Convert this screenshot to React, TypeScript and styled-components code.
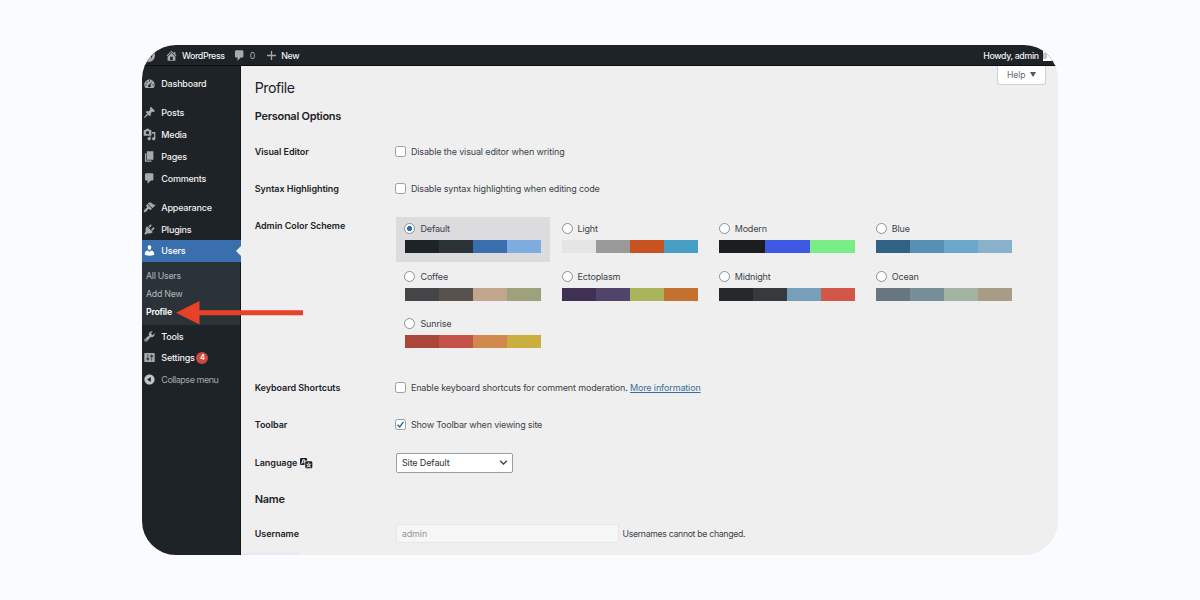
import React from 'react';
import styled, { createGlobalStyle } from 'styled-components';

const Global = createGlobalStyle`
  * { box-sizing: border-box; }
  body { margin: 0; background: #f9fbff; }
`;

const Page = styled.div`
  width: 1200px;
  height: 600px;
  padding: 45px 142px;
  background: #f9fbff;
  font-family: Inter, 'Liberation Sans', sans-serif;
  overflow: hidden;
`;

const Frame = styled.div`
  position: relative;
  display: flex;
  flex-direction: column;
  width: 916px;
  height: 510px;
  border-radius: 34px;
  overflow: hidden;
  background: #efefef;
`;

const TopBar = styled.header`
  display: flex;
  align-items: center;
  flex: none;
  height: 20.5px;
  padding: 1.2px 0 0 0;
  background: #1d2327;
  border-bottom: 1px solid #0b0f12;
  color: #f0f0f1;
  font-size: 8.8px;
  font-weight: 500;
  letter-spacing: -0.36px;
`;

const BarItem = styled.div<{ $left: number; $gap?: number; $dim?: boolean }>`
  display: flex;
  align-items: center;
  white-space: nowrap;
  margin-left: ${(p) => p.$left}px;
  gap: ${(p) => p.$gap ?? 4}px;
  color: ${(p) => (p.$dim ? '#a7aaad' : '#f0f0f1')};
  font-weight: ${(p) => (p.$dim ? 400 : 500)};
`;

const Account = styled.div`
  display: flex;
  align-items: center;
  margin-left: auto;
  gap: 4.3px;
  height: 19px;
`;

const Avatar = styled.div`
  width: 15px;
  height: 15px;
  margin-top: -4px;
  background: radial-gradient(circle at 1px 10px, #c3c4c7 3px, #fff 3.5px);
`;

const Body = styled.div`
  display: flex;
  flex: 1;
  min-height: 0;
`;

const Sidebar = styled.nav`
  width: 99px;
  flex: none;
  padding-top: 7.6px;
  background: #1d2327;
  border-right: 1px solid #101517;
`;

const MenuRow = styled.div<{ $active?: boolean; $dim?: boolean }>`
  position: relative;
  display: flex;
  align-items: center;
  height: 21.8px;
  width: 99px;
  padding-left: 1.2px;
  gap: 5.1px;
  white-space: nowrap;
  font-size: 9px;
  letter-spacing: ${(p) => (p.$dim ? -0.47 : -0.2)}px;
  font-weight: ${(p) => (p.$dim ? 400 : 500)};
  color: ${(p) => (p.$active ? '#fff' : p.$dim ? '#a7aaad' : '#f0f0f1')};
  background: ${(p) => (p.$active ? '#3a6fad' : 'transparent')};
`;

const Separator = styled.div`
  height: 7.2px;
`;

const Notch = styled.span`
  position: absolute;
  right: 0;
  top: 5.5px;
  border: 5.5px solid transparent;
  border-left-width: 0;
  border-right-color: #efefef;
`;

const Submenu = styled.div`
  height: 63.4px;
  padding: 4.9px 0 0 4px;
  background: #2c3338;
`;

const SubItem = styled.div<{ $current?: boolean }>`
  height: 18.3px;
  line-height: 18.3px;
  font-size: 8.8px;
  letter-spacing: -0.25px;
  font-weight: ${(p) => (p.$current ? 600 : 400)};
  color: ${(p) => (p.$current ? '#fff' : '#b4b9be')};
`;

const Count = styled.span`
  width: 12px;
  height: 12px;
  margin-left: -3.5px;
  margin-top: 1px;
  border-radius: 50%;
  background: #cb4a3f;
  color: #fff;
  font-size: 7.5px;
  font-weight: 600;
  line-height: 12px;
  text-align: center;
`;

const Content = styled.main`
  position: relative;
  flex: 1;
  padding-left: 13.7px;
  color: #1d2327;
`;

const Title = styled.h1`
  margin: 0;
  padding-top: 8px;
  height: 36.5px;
  line-height: 28px;
  font-size: 14.2px;
  letter-spacing: -0.45px;
  font-weight: 400;
`;

const Heading = styled.h2<{ $height: number; $line: number }>`
  margin: 0;
  height: ${(p) => p.$height}px;
  line-height: ${(p) => p.$line}px;
  font-size: 11px;
  letter-spacing: -0.28px;
  font-weight: 600;
`;

const FormRow = styled.div<{ $height: number; $top?: boolean }>`
  display: grid;
  grid-template-columns: 141.3px 1fr;
  align-items: ${(p) => (p.$top ? 'start' : 'center')};
  height: ${(p) => p.$height}px;
`;

const Label = styled.div<{ $top?: boolean }>`
  display: flex;
  align-items: center;
  gap: 2.5px;
  padding-top: ${(p) => (p.$top ? 12.5 : 0)}px;
  font-size: 9px;
  letter-spacing: -0.05px;
  line-height: 12px;
  font-weight: 600;
`;

const Field = styled.div<{ $tracking?: number }>`
  display: flex;
  align-items: center;
  gap: 5px;
  white-space: nowrap;
  font-size: 9px;
  letter-spacing: ${(p) => p.$tracking ?? -0.14}px;
  color: #3c434a;
`;

const Check = styled.span`
  display: flex;
  align-items: center;
  justify-content: center;
  width: 11px;
  height: 11px;
  margin-top: -0.6px;
  margin-left: -0.8px;
  margin-right: -0.3px;
  border: 1px solid #9a9da1;
  border-radius: 2.5px;
  background: #fff;
`;

const FieldText = styled.span`
  position: relative;
  top: -0.5px;
`;

const Link = styled.a`
  margin-left: 2.4px;
  color: #3a6d9b;
  text-decoration: underline;
  text-underline-offset: 1px;
  text-decoration-thickness: 1px;
`;

const Schemes = styled.div`
  display: grid;
  grid-template-columns: repeat(4, 154px);
  grid-auto-rows: 45px;
  column-gap: 3.1px;
  row-gap: 2.6px;
  padding-top: 10px;
`;

const Scheme = styled.div<{ $selected?: boolean }>`
  padding: 5.5px 9px 0;
  background: ${(p) => (p.$selected ? '#dcdcde' : 'transparent')};
`;

const SchemeName = styled.div`
  display: flex;
  align-items: center;
  gap: 5px;
  height: 12px;
  margin-left: -0.5px;
  font-size: 9px;
  letter-spacing: -0.17px;
  color: #3c434a;
`;

const Radio = styled.span<{ $on?: boolean }>`
  width: 11px;
  height: 11px;
  border: 1px solid #8c8f94;
  border-radius: 50%;
  background: ${(p) => (p.$on ? 'radial-gradient(circle, #2f69ab 2.2px, #fff 2.9px)' : '#fff')};
`;

const Palette = styled.div`
  display: flex;
  height: 13px;
  margin-top: 5.5px;
`;

const Swatch = styled.span<{ $color: string }>`
  flex: 1;
  background: ${(p) => p.$color};
`;

const Select = styled.div`
  display: flex;
  align-items: center;
  justify-content: space-between;
  width: 117px;
  height: 20px;
  padding: 0 4px 0 5px;
  border: 1px solid #9a9da1;
  border-radius: 2px;
  background: #fff;
  color: #2c3338;
`;

const Input = styled.div`
  width: 223.3px;
  height: 19px;
  margin-right: -1.8px;
  padding-left: 4.7px;
  border: 1px solid #e6e6e7;
  border-radius: 2px;
  background: #f6f6f6;
  color: #94979b;
  letter-spacing: -0.1px;
  line-height: 17px;
`;

const Note = styled.span`
  font-size: 8.7px;
  letter-spacing: -0.3px;
`;

const Help = styled.div`
  position: absolute;
  top: 0;
  right: 12px;
  display: flex;
  align-items: center;
  justify-content: center;
  gap: 5px;
  width: 49.5px;
  height: 19.5px;
  padding-left: 1px;
  border: 1px solid #cfd0d3;
  border-top: 0;
  border-radius: 0 0 3px 3px;
  background: #fff;
  color: #646970;
  font-size: 8.6px;
  letter-spacing: -0.1px;
`;

const StatusEdge = styled.div`
  position: absolute;
  left: 0;
  bottom: 0;
  width: 58px;
  height: 3px;
  background: linear-gradient(#ededef, #e6e8ed);
`;

const Arrow = styled.svg`
  position: absolute;
  left: 34px;
  top: 255px;
`;

const paths = {
  home: 'M16 8.5l1.53 1.53-1.06 1.06L10 4.6l-6.47 6.49-1.06-1.06L10 2.5l4 4v-2h2v4zm-6-2.46l6 5.99V18H4v-5.97zM12 17v-5H8v5h4z',
  comment: 'M5 2h9c1.1 0 2 .9 2 2v7c0 1.1-.9 2-2 2h-2l-5 5v-5H5c-1.1 0-2-.9-2-2V4c0-1.1.9-2 2-2z',
  plus: 'M9 3h2v6h6v2h-6v6H9v-6H3V9h6z',
  wordpress:
    'M20 10c0-5.510-4.490-10-10-10C4.480 0 0 4.490 0 10c0 5.520 4.480 10 10 10 5.510 0 10-4.480 10-10zM7.780 15.370L4.370 6.220c.55-.02 1.170-.08 1.170-.08.5-.06.44-1.130-.06-1.110 0 0-1.450.11-2.370.11-.18 0-.37 0-.58-.010C4.120 2.690 6.870 1.110 10 1.110c2.330 0 4.450.87 6.050 2.340-.68-.11-1.650.39-1.650 1.580 0 .74.45 1.360.9 2.100.35.61.55 1.360.55 2.460 0 1.490-1.400 5-1.400 5l-3.030-8.370c.54-.02.82-.17.82-.17.5-.05.44-1.250-.06-1.220 0 0-1.440.12-2.380.12-.87 0-2.330-.12-2.330-.12-.5-.03-.56 1.200-.06 1.220l.92.08 1.260 3.410z',
  dashboard:
    'M3.76 17h12.480c1.100-1.370 1.760-3.110 1.760-5 0-4.420-3.580-8-8-8s-8 3.580-8 8c0 1.890.66 3.630 1.760 5zM9 6a1 1 0 1 0 2 0a1 1 0 1 0-2 0zM5 8a1 1 0 1 0 2 0a1 1 0 1 0-2 0zM3.500 12a1 1 0 1 0 2 0a1 1 0 1 0-2 0zM14.500 12a1 1 0 1 0 2 0a1 1 0 1 0-2 0zM14.300 7.100l-2.700 5.200a2.100 2.100 0 1 1-1.500-.8z',
  post: 'M10.44 3.02l1.82-1.82 6.36 6.35-1.83 1.82c-1.05-.68-2.48-.57-3.41.36l-.75.75c-.92.93-1.04 2.35-.35 3.41l-1.83 1.82-2.41-2.41-2.8 2.79c-.42.42-3.38 2.71-3.8 2.29s1.86-3.39 2.28-3.81l2.79-2.79L4.1 9.36l1.83-1.82c1.05.69 2.48.57 3.4-.36l.75-.75c.93-.92 1.05-2.35.36-3.41z',
  media:
    'M13 11V4c0-.55-.45-1-1-1h-1.67L9 1H5L3.67 3H2c-.55 0-1 .45-1 1v7c0 .55.45 1 1 1h10c.55 0 1-.45 1-1zM7 4.5c1.38 0 2.5 1.12 2.5 2.5S8.38 9.5 7 9.5 4.5 8.38 4.5 7 5.62 4.5 7 4.5zM14 6h5v10.5c0 1.38-1.12 2.5-2.5 2.5S14 17.88 14 16.5s1.12-2.5 2.5-2.5c.17 0 .34.02.5.05V9h-3V6zm-4 8.05V13h2v3.5c0 1.38-1.12 2.5-2.5 2.5S7 17.88 7 16.5 8.12 14 9.5 14c.17 0 .34.02.5.05z',
  page: 'M6 15V2h10v13H6zm-1 1h8v2H3V5h2v11z',
  appearance:
    'M14.48 11.06L7.41 3.99l1.5-1.5c.5-.56 2.3-.47 3.51.32 1.21.8 1.43 1.28 2.91 2.1 1.18.64 2.45 1.26 4.45.85zm-.71.71L6.7 4.7 4.93 6.47c-.39.39-.39 1.02 0 1.41l1.06 1.06c.39.39.39 1.03 0 1.42-.6.6-1.43 1.11-2.21 1.69-.35.26-.7.53-1.01.84C1.43 14.23.4 16.08 1.4 17.07c.99 1 2.84-.03 4.18-1.36.31-.31.58-.66.85-1.02.57-.78 1.08-1.61 1.69-2.21.39-.39 1.02-.39 1.41 0l1.06 1.06c.39.39 1.02.39 1.41 0z',
  plugins:
    'M13.11 4.36L9.87 7.6 8 5.73l3.24-3.24c.35-.34 1.05-.2 1.56.32.52.51.66 1.21.31 1.55zm-8 1.77l.91-1.12 9.01 9.01-1.19.84c-.71.71-2.63 1.16-3.82 1.16H6.14L4.9 17.26c-.59.59-1.54.59-2.12 0-.59-.58-.59-1.53 0-2.12l1.24-1.24v-3.88c0-1.13.4-3.19 1.09-3.89zm7.26 3.97l3.24-3.24c.34-.35 1.04-.21 1.55.31.52.51.66 1.21.31 1.55l-3.24 3.25z',
  users:
    'M10 9.25c-2.27 0-2.73-3.44-2.73-3.44C7 4.02 7.82 2 9.97 2c2.16 0 2.98 2.02 2.71 3.81 0 0-.41 3.44-2.68 3.44zm0 2.57L12.72 10c2.39 0 4.52 2.33 4.52 4.53v2.49s-3.65 1.13-7.24 1.13c-3.65 0-7.24-1.13-7.24-1.13v-2.49c0-2.25 1.94-4.48 4.47-4.48z',
  tools:
    'M16.68 9.77c-1.34 1.34-3.3 1.67-4.95.99l-5.41 6.52c-.99.99-2.59.99-3.58 0s-.99-2.59 0-3.57l6.52-5.42c-.68-1.65-.35-3.61.99-4.95 1.28-1.28 3.12-1.62 4.72-1.06l-2.89 2.89 2.82 2.82 2.86-2.87c.53 1.58.18 3.39-1.08 4.65zM3.81 16.21c.4.39 1.04.39 1.43 0 .4-.4.4-1.04 0-1.43-.39-.4-1.03-.4-1.43 0-.39.39-.39 1.03 0 1.43z',
  settings:
    'M18 16V4c0-.55-.45-1-1-1H3c-.55 0-1 .45-1 1v12c0 .55.45 1 1 1h14c.55 0 1-.45 1-1zM8 11h1c.55 0 1 .45 1 1s-.45 1-1 1H8v1.5c0 .28-.22.5-.5.5s-.5-.22-.5-.5V13H6c-.55 0-1-.45-1-1s.45-1 1-1h1V5.5c0-.28.22-.5.5-.5s.5.22.5.5V11zm5-2h-1c-.55 0-1-.45-1-1s.45-1 1-1h1V5.5c0-.28.22-.5.5-.5s.5.22.5.5V7h1c.55 0 1 .45 1 1s-.45 1-1 1h-1v5.5c0 .28-.22.5-.5.5s-.5-.22-.5-.5V9z',
  collapse:
    'M10 2.16c4.33 0 7.84 3.51 7.84 7.84s-3.51 7.84-7.84 7.84S2.16 14.33 2.16 10 5.71 2.16 10 2.16zm2 11.72V6.12L6.18 9.97z',
  translation:
    'M11 7H9.49c-.63 0-1.25.3-1.59.7L7 5H4.13l-2.39 7h1.69l.74-2H7v4H2c-1.1 0-2-.9-2-2V5c0-1.1.9-2 2-2h7c1.1 0 2 .9 2 2v2zM6.51 9H4.49l1-2.93zM10 8h7c1.1 0 2 .9 2 2v7c0 1.1-.9 2-2 2h-7c-1.1 0-2-.9-2-2v-7c0-1.1.9-2 2-2zm7.25 5v-1.08h-3.17V9.75h-1.16v2.17H9.75V13h1.28c.11.85.56 1.85 1.28 2.62-.87.36-1.89.62-2.31.62-.01.02.22.97.2 1.46.84 0 2.21-.5 3.28-1.15 1.09.65 2.48 1.15 3.34 1.15-.02-.49.2-1.44.2-1.46-.43 0-1.49-.27-2.38-.63.7-.77 1.14-1.77 1.25-2.61h1.36zm-3.81 1.93c-.5-.46-.85-1.13-1.01-1.93h2.09c-.17.8-.51 1.47-1 1.93l-.04.03s-.03-.02-.04-.03z',
};

type IconName = keyof typeof paths;

const Icon = ({ name, size = 13, color = '#a7aaad' }: { name: IconName; size?: number; color?: string }) => (
  <svg width={size} height={size} viewBox="0 0 20 20" fill={color} fillRule="evenodd">
    <path d={paths[name]} />
  </svg>
);

const MenuItem = ({ icon, label, dim, active, count }: { icon: IconName; label: string; dim?: boolean; active?: boolean; count?: number }) => (
  <MenuRow $dim={dim} $active={active}>
    <Icon name={icon} color={active ? '#fff' : dim ? '#c3c4c7' : '#a7aaad'} />
    {label}
    {count && <Count>{count}</Count>}
    {active && <Notch />}
  </MenuRow>
);

const schemes: { name: string; colors: string[] }[] = [
  { name: 'Default', colors: ['#1d2327', '#2c3338', '#3a6fad', '#7facdf'] },
  { name: 'Light', colors: ['#e5e5e6', '#999a99', '#c75321', '#489fc6'] },
  { name: 'Modern', colors: ['#1c1d20', '#3e58e1', '#7bed86'] },
  { name: 'Blue', colors: ['#2f6285', '#5691b3', '#69a7cb', '#89b1cb'] },
  { name: 'Coffee', colors: ['#454446', '#58524f', '#c2a58d', '#9ea27c'] },
  { name: 'Ectoplasm', colors: ['#403153', '#51446b', '#a8b55b', '#c3712f'] },
  { name: 'Midnight', colors: ['#25282b', '#363a3c', '#789fb9', '#d15848'] },
  { name: 'Ocean', colors: ['#687681', '#778d97', '#a3b5a2', '#a89c86'] },
  { name: 'Sunrise', colors: ['#ab463b', '#c55347', '#d2894d', '#c9af3d'] },
];

const CheckField = ({ text, checked, link, tracking }: { text: string; checked?: boolean; link?: string; tracking?: number }) => (
  <Field $tracking={tracking}>
    <Check>
      {checked && (
        <svg width="9" height="9" viewBox="0 0 9 9" fill="none" stroke="#2f69a5" strokeWidth="1.5">
          <path d="M1.500 4.700L3.700 6.900L7.500 1.900" />
        </svg>
      )}
    </Check>
    <FieldText>
      {text}
      {link && <Link>{link}</Link>}
    </FieldText>
  </Field>
);

export default function App() {
  return (
    <Page>
      <Global />
      <Frame>
        <TopBar>
          <Icon name="wordpress" size={13} />
          <BarItem $left={10}>
            <Icon name="home" />
            WordPress
          </BarItem>
          <BarItem $left={8.6} $gap={3.6} $dim>
            <Icon name="comment" />0
          </BarItem>
          <BarItem $left={9.8} $gap={3.4}>
            <Icon name="plus" />
            New
          </BarItem>
          <Account>
            Howdy, admin
            <Avatar />
          </Account>
        </TopBar>
        <Body>
          <Sidebar>
            <MenuItem icon="dashboard" label="Dashboard" />
            <Separator />
            <MenuItem icon="post" label="Posts" />
            <MenuItem icon="media" label="Media" />
            <MenuItem icon="page" label="Pages" />
            <MenuItem icon="comment" label="Comments" />
            <Separator />
            <MenuItem icon="appearance" label="Appearance" />
            <MenuItem icon="plugins" label="Plugins" />
            <MenuItem icon="users" label="Users" active />
            <Submenu>
              <SubItem>All Users</SubItem>
              <SubItem>Add New</SubItem>
              <SubItem $current>Profile</SubItem>
            </Submenu>
            <MenuItem icon="tools" label="Tools" />
            <MenuItem icon="settings" label="Settings" count={4} />
            <MenuItem icon="collapse" label="Collapse menu" dim />
          </Sidebar>
          <Content>
            <Title>Profile</Title>
            <Heading $height={31} $line={28}>Personal Options</Heading>
            <FormRow $height={37}>
              <Label>Visual Editor</Label>
              <CheckField text="Disable the visual editor when writing" />
            </FormRow>
            <FormRow $height={37}>
              <Label>Syntax Highlighting</Label>
              <CheckField text="Disable syntax highlighting when editing code" />
            </FormRow>
            <FormRow $height={162.5} $top>
              <Label $top>Admin Color Scheme</Label>
              <Schemes>
                {schemes.map((s, i) => (
                  <Scheme key={s.name} $selected={i === 0}>
                    <SchemeName>
                      <Radio $on={i === 0} />
                      {s.name}
                    </SchemeName>
                    <Palette>
                      {s.colors.map((c) => (
                        <Swatch key={c} $color={c} />
                      ))}
                    </Palette>
                  </Scheme>
                ))}
              </Schemes>
            </FormRow>
            <FormRow $height={37}>
              <Label>Keyboard Shortcuts</Label>
              <CheckField text="Enable keyboard shortcuts for comment moderation." link="More information" />
            </FormRow>
            <FormRow $height={37.5}>
              <Label>Toolbar</Label>
              <CheckField text="Show Toolbar when viewing site" checked tracking={-0.19} />
            </FormRow>
            <FormRow $height={37.5}>
              <Label>
                Language
                <Icon name="translation" color="#1d2327" />
              </Label>
              <Field>
                <Select>
                  Site Default
                  <svg width="9" height="9" viewBox="0 0 9 9" fill="none" stroke="#3c434a" strokeWidth="1.300">
                    <path d="M1.200 2.800L4.500 6L7.800 2.800" />
                  </svg>
                </Select>
              </Field>
            </FormRow>
            <Heading $height={34.5} $line={34}>Name</Heading>
            <FormRow $height={35.5}>
              <Label>Username</Label>
              <Field>
                <Input>admin</Input>
                <Note>Usernames cannot be changed.</Note>
              </Field>
            </FormRow>
            <Help>
              Help
              <svg width="6" height="5" viewBox="0 0 6 5" fill="#50575e">
                <path d="M0 0h6L3 5z" />
              </svg>
            </Help>
            <StatusEdge />
          </Content>
        </Body>
        <Arrow width="128" height="25" viewBox="0 0 128 25" fill="#e8412a">
          <path d="M0 12.700L23.500 1v9.300H127v5H23.500v9.200z" />
        </Arrow>
      </Frame>
    </Page>
  );
}
